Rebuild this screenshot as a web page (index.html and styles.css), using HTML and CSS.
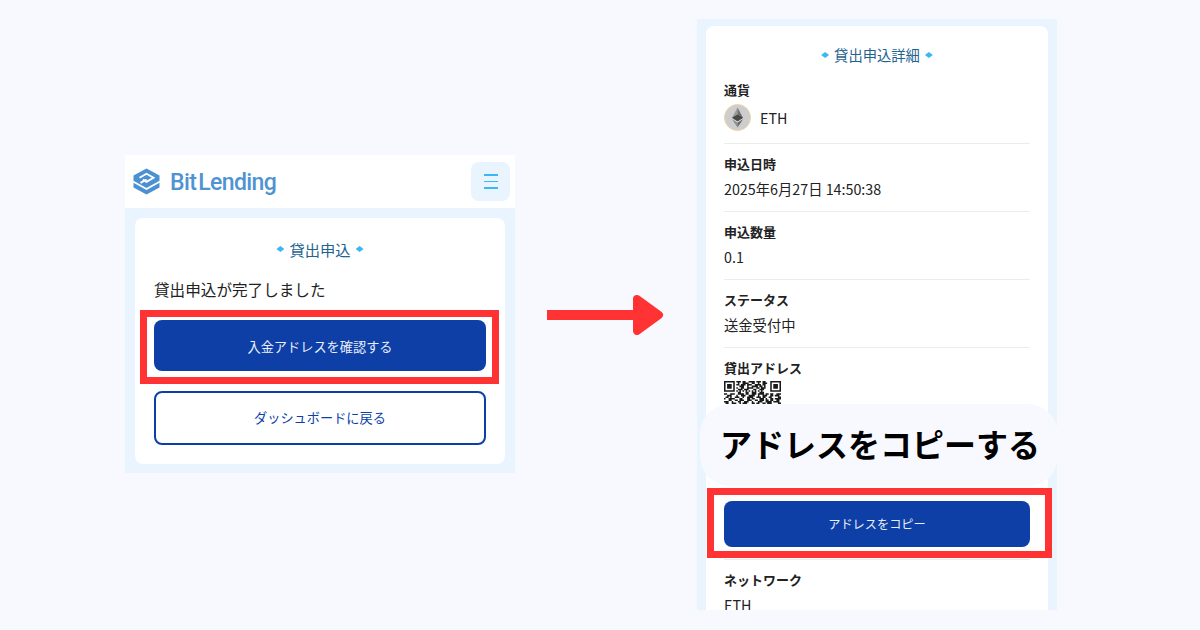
FILE: index.html
```html
<!DOCTYPE html>
<html lang="ja">
<head>
<meta charset="utf-8">
<title>貸出申込</title>
<link rel="stylesheet" href="styles.css">
</head>
<body>
<main class="stage">
  <section class="phone phone-left">
    <header class="topbar">
      <div class="logo">
        <svg class="logo-mark" viewBox="0 0 27 27" width="27" height="27">
          <path fill="#4a90d2" d="M13.5 0.5 26.5 7.5V19.5L13.5 26.5 0.5 19.5V7.5Z"/>
          <path fill="none" stroke="#fff" stroke-width="1.9" d="M6.5 9.8 13.5 5.8 20.5 9.8 13.5 13.8 9.8 11.7M7.5 14.8 13.5 11.5M0 13.5 13.5 21 27 13.5"/>
        </svg>
        <span class="logo-text">Bit<span class="logo-l">L</span>ending</span>
      </div>
      <button class="menu-btn" type="button" aria-label="メニュー"><span></span><span></span><span></span></button>
    </header>
    <div class="left-body">
      <div class="card card-left">
        <h2 class="title title-lg">貸出申込</h2>
        <p class="message">貸出申込が完了しました</p>
        <a class="btn btn-solid btn-confirm">入金アドレスを確認する</a>
        <a class="btn btn-outline">ダッシュボードに戻る</a>
      </div>
    </div>
  </section>

  <svg class="arrow" viewBox="0 0 117 40" width="117" height="40">
    <rect x="0" y="15" width="92" height="10" fill="#ff3333"/>
    <path fill="#ff3333" stroke="#ff3333" stroke-width="8" stroke-linejoin="round" d="M90 4 112 20 90 36Z"/>
  </svg>

  <section class="phone phone-right">
    <div class="card card-right">
      <h2 class="title">貸出申込詳細</h2>
      <div class="row row-first">
        <div class="label">通貨</div>
        <div class="coin">
          <svg class="coin-icon" viewBox="0 0 27 27" width="27" height="27">
            <circle cx="13.5" cy="13.5" r="13" fill="#cdcdcd" stroke="#ecd3a8" stroke-width="1"/>
            <path fill="#9a9a9a" d="M13.5 3.5 8 13.8 13.5 17.2Z"/>
            <path fill="#707070" d="M13.5 3.5 19 13.8 13.5 17.2Z"/>
            <path fill="#484848" d="M13.5 10.5 8 13.8 13.5 17.2 19 13.8Z"/>
            <path fill="#8c8c8c" d="M8 15.2 13.5 23.5V18.7Z"/>
            <path fill="#666" d="M19 15.2 13.5 23.5V18.7Z"/>
          </svg>
          <span class="value">ETH</span>
        </div>
      </div>
      <div class="row">
        <div class="label">申込日時</div>
        <div class="value">2025年6月27日 14:50:38</div>
      </div>
      <div class="row">
        <div class="label">申込数量</div>
        <div class="value">0.1</div>
      </div>
      <div class="row">
        <div class="label">ステータス</div>
        <div class="value">送金受付中</div>
      </div>
      <div class="row row-address">
        <div class="label">貸出アドレス</div>
        <svg class="qr" viewBox="0 0 37 37" width="57" height="57">
          <path fill="#1a1a1a" d="M0 0h7v7h-7zM1 1v5h5v-5zM2 2h3v3h-3zM30 0h7v7h-7zM31 1v5h5v-5zM32 2h3v3h-3zM0 30h7v7h-7zM1 31v5h5v-5zM2 32h3v3h-3z"/>
          <path fill="none" stroke="#1a1a1a" stroke-width="1" d="M8 .5h3m1 0h2m2 0h4m1 0h3m1 0h2M9 1.5h1m2 0h4m2 0h2m2 0h1m2 0h3M8 2.5h2m1 0h3m1 0h3m2 0h4m1 0h2M10 3.5h3m2 0h1m2 0h4m1 0h2m1 0h1M8 4.5h1m2 0h2m2 0h4m2 0h2m1 0h3M9 5.5h3m1 0h3m3 0h2m2 0h3M8 6.5h1m1 0h1m1 0h1m1 0h1m1 0h1m1 0h1m1 0h1m1 0h1m1 0h1M9 7.5h2m3 0h2m2 0h3m2 0h3M0 8.5h2m2 0h3m2 0h4m1 0h2m2 0h3m1 0h4m1 0h2m1 0h2M2 9.5h3m3 0h1m2 0h3m2 0h4m2 0h1m2 0h3m2 0h2M1 10.5h2m1 0h1m2 0h3m2 0h1m2 0h4m2 0h3m1 0h2m2 0h2M0 11.5h1m2 0h4m3 0h2m3 0h2m1 0h2m3 0h3m1 0h1m2 0h2M3 12.5h2m2 0h2m1 0h3m2 0h3m2 0h2m1 0h3m1 0h2m1 0h2M0 13.5h3m2 0h1m3 0h2m2 0h3m2 0h1m3 0h3m2 0h4M1 14.5h2m2 0h3m2 0h1m1 0h3m3 0h2m1 0h2m2 0h2m1 0h3M34 8.5h3M33 9.5h3M35 10.5h2M33 11.5h4M34 12.5h2M32 13.5h4M35 14.5h2M8 20.5h6m2 0h5m2 0h6M10 24.5h4m3 0h6m3 0h4M9 28.5h3m4 0h7m3 0h3M8 33.5h5m4 0h3m3 0h5"/>
        </svg>
        <a class="btn btn-solid btn-copy">アドレスをコピー</a>
      </div>
      <div class="row">
        <div class="label">ネットワーク</div>
        <div class="value">ETH</div>
      </div>
    </div>
  </section>

  <div class="frame frame-left"></div>
  <div class="frame frame-right"></div>
  <div class="caption">アドレスをコピーする</div>
</main>
</body>
</html>
```
FILE: styles.css
```css
* { box-sizing: border-box; }
html, body { margin: 0; padding: 0; }
body {
  background: #f7f9ff;
  font-family: "Noto Sans CJK JP", "Noto Sans", sans-serif;
  color: #222;
}
.stage {
  position: relative;
  width: 1200px;
  height: 630px;
  overflow: hidden;
  display: flex;
  align-items: flex-start;
  padding-left: 125px;
}
.phone { background: #e9f4fe; flex: none; }
.phone-left { width: 390px; height: 318px; margin-top: 155px; }
.phone-right {
  width: 360px;
  height: 591px;
  margin-top: 19px;
  margin-left: 33px;
  padding: 7px 9px 0;
  overflow: hidden;
}
.topbar {
  height: 53px;
  background: #fff;
  display: flex;
  align-items: center;
  justify-content: space-between;
  padding: 0 5px 0 8px;
}
.logo { display: flex; align-items: center; gap: 10px; }
.logo-mark { display: block; }
.logo-text {
  font-family: "Roboto", sans-serif;
  font-weight: 500;
  font-size: 23px;
  line-height: 29px;
  padding-top: 2px;
  color: #4f93d3;
  letter-spacing: -0.6px;
}
.logo-l { margin-left: 2px; }
.menu-btn {
  width: 39px;
  height: 39px;
  border: 0;
  border-radius: 8px;
  background: #e9f4fe;
  padding: 0;
  display: flex;
  flex-direction: column;
  align-items: center;
  justify-content: center;
  gap: 5px;
}
.menu-btn span { display: block; width: 14px; height: 1.5px; background: #3ab8f5; }
.left-body { padding: 10px; }
.card { background: #fff; border-radius: 8px; }
.card-left { height: 246px; padding: 19px 19px 0; }
.card-right { height: 600px; padding: 17px 18px 0; }
.title {
  margin: 0;
  font-size: 14.3px;
  line-height: 24px;
  font-weight: 400;
  color: #1f6491;
  text-align: center;
  display: flex;
  align-items: center;
  justify-content: center;
  gap: 5px;
}
.title-lg { font-size: 15.3px; }
.title::before, .title::after {
  content: "";
  width: 8px;
  height: 6px;
  background: #3ab8f5;
  clip-path: polygon(50% 0, 100% 50%, 50% 100%, 0 50%);
}
.message { margin: 17px 0 0; font-size: 15.6px; line-height: 23px; color: #222; }
.btn {
  display: flex;
  align-items: center;
  justify-content: center;
  border-radius: 8px;
  font-size: 13.2px;
}
.btn-solid { background: #0d3fa6; color: #e8eefb; }
.btn-confirm { height: 51px; margin-top: 19px; padding-top: 1px; }
.btn-outline { height: 54px; margin-top: 20px; padding-bottom: 2px; background: #fff; border: 2px solid #0d3fa6; color: #0d3fa6; }
.btn-copy { height: 46px; margin-top: 63px; font-size: 12.2px; }
.row { padding: 10px 0 11px; border-bottom: 1px solid #ececec; }
.row:last-of-type { border-bottom: 0; }
.row-first { padding-top: 13px; padding-bottom: 12px; }
.label { font-size: 13px; line-height: 20px; font-weight: 700; color: #222; }
.value { font-size: 14.3px; line-height: 22px; margin-top: 4px; color: #222; }
.coin { display: flex; align-items: center; gap: 9px; margin-top: 4px; }
.coin .value { margin-top: 0; }
.coin-icon { display: block; flex: none; }
.qr { display: block; margin-top: 3px; }
.row-address { padding-bottom: 12px; }
.frame {
  position: absolute;
  border: 7px solid #ff3333;
}
.frame-left { left: 140px; top: 310px; width: 359px; height: 74px; }
.frame-right { left: 707px; top: 488px; width: 345px; height: 70px; }
.caption {
  position: absolute;
  left: 700px;
  top: 404px;
  width: 358px;
  height: 82px;
  border-radius: 30px;
  background: #f7f9ff;
  color: #000;
  font-weight: 700;
  font-size: 32px;
  line-height: 78px;
  padding-left: 20px;
  white-space: nowrap;
}
.arrow { display: block; flex: none; margin: 295px 0 0 32px; }
```
